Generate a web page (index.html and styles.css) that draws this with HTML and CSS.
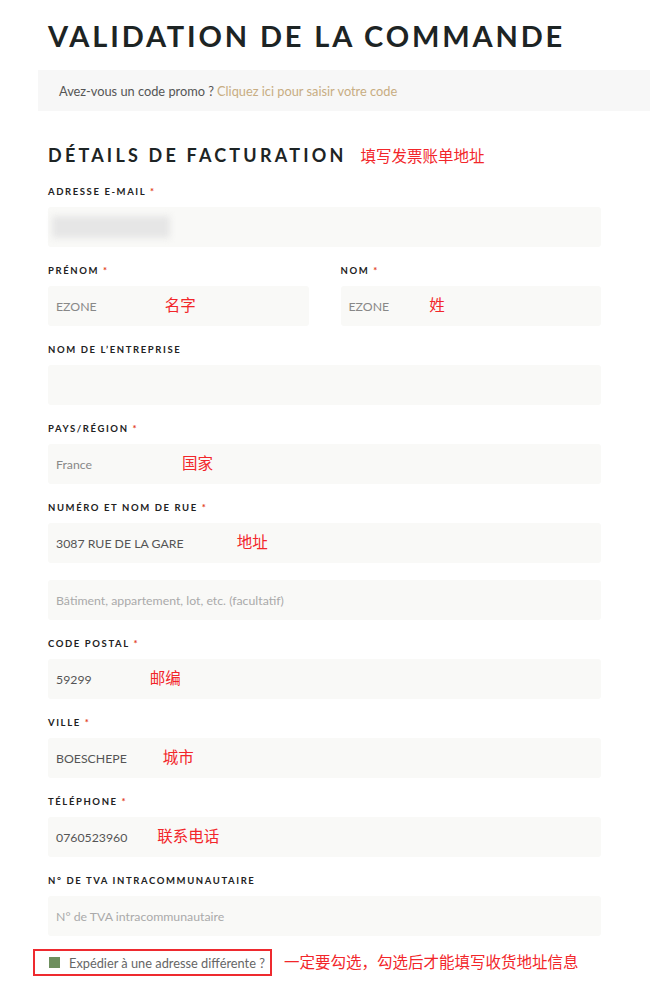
FILE: index.html
```html
<!DOCTYPE html>
<html lang="fr">
<head>
<meta charset="utf-8">
<title>Validation de la commande</title>
<link rel="stylesheet" href="styles.css">
</head>
<body>
<main class="page">
  <h1 class="title">VALIDATION DE LA COMMANDE</h1>
  <div class="promo">Avez-vous un code promo ? <a class="promo-link" href="#">Cliquez ici pour saisir votre code</a></div>

  <h3 class="section"><span>DÉTAILS DE FACTURATION</span><span class="note note-head">填写发票账单地址</span></h3>

  <div class="field">
    <label class="label">ADRESSE E-MAIL <abbr class="req">*</abbr></label>
    <div class="input"><span class="blur"></span></div>
  </div>

  <div class="row">
    <div class="field">
      <label class="label">PRÉNOM <abbr class="req">*</abbr></label>
      <div class="input"><span class="value">EZONE</span><span class="note n-prenom">名字</span></div>
    </div>
    <div class="field">
      <label class="label">NOM <abbr class="req">*</abbr></label>
      <div class="input"><span class="value">EZONE</span><span class="note n-nom">姓</span></div>
    </div>
  </div>

  <div class="field">
    <label class="label">NOM DE L’ENTREPRISE</label>
    <div class="input"></div>
  </div>

  <div class="field">
    <label class="label">PAYS/RÉGION <abbr class="req">*</abbr></label>
    <div class="input"><span class="value">France</span><span class="note n-pays">国家</span></div>
  </div>

  <div class="field">
    <label class="label">NUMÉRO ET NOM DE RUE <abbr class="req">*</abbr></label>
    <div class="input"><span class="value dark">3087 RUE DE LA GARE</span><span class="note n-rue">地址</span></div>
    <div class="input second"><span class="placeholder">Bâtiment, appartement, lot, etc. (facultatif)</span></div>
  </div>

  <div class="field">
    <label class="label">CODE POSTAL <abbr class="req">*</abbr></label>
    <div class="input"><span class="value dark">59299</span><span class="note n-cp">邮编</span></div>
  </div>

  <div class="field">
    <label class="label">VILLE <abbr class="req">*</abbr></label>
    <div class="input"><span class="value dark">BOESCHEPE</span><span class="note n-ville">城市</span></div>
  </div>

  <div class="field">
    <label class="label">TÉLÉPHONE <abbr class="req">*</abbr></label>
    <div class="input"><span class="value dark">0760523960</span><span class="note n-tel">联系电话</span></div>
  </div>

  <div class="field">
    <label class="label">N° DE TVA INTRACOMMUNAUTAIRE</label>
    <div class="input"><span class="placeholder">N° de TVA intracommunautaire</span></div>
  </div>

  <div class="ship">
    <div class="ship-box"><span class="check"></span><span class="ship-text">Expédier à une adresse différente ?</span></div>
    <span class="note n-ship">一定要勾选，勾选后才能填写收货地址信息</span>
  </div>
</main>
</body>
</html>
```

FILE: styles.css
```css
* { box-sizing: border-box; }
html, body { margin: 0; padding: 0; background: #fff; }
body { font-family: Lato, "Noto Sans CJK SC", sans-serif; color: #222; overflow: hidden; }

.page { padding: 21px 0 0 48px; width: 650px; }

.title {
  margin: 0;
  font-family: Lato, sans-serif;
  font-weight: 700;
  font-size: 29px;
  line-height: 29px;
  letter-spacing: 2.85px;
  color: #1d2424;
  white-space: nowrap;
}

.promo {
  margin: 20px 0 0 -10px;
  height: 41px;
  background: #f7f7f7;
  padding-left: 21px;
  display: flex;
  align-items: center;
  font-size: 12.8px;
  color: #555;
}
.promo-link { color: #c8ad82; text-decoration: none; margin-left: 3px; }

.section {
  margin: 33px 0 0 0;
  display: flex;
  align-items: center;
  font-family: Lato, sans-serif;
  font-weight: 700;
  font-size: 18px;
  line-height: 22px;
  letter-spacing: 3.2px;
  color: #1d2424;
}
.note {
  font-family: "Noto Sans CJK SC", sans-serif;
  font-weight: 400;
  color: #f2262a;
  font-size: 15.5px;
  letter-spacing: 0;
  line-height: 20px;
}
.note-head { margin-left: 14px; }

.field { display: flex; flex-direction: column; margin-top: 18px; width: 553px; }
.section + .field { margin-top: 20px; }
.row { display: flex; gap: 32px; width: 553px; }
.row .field { flex: 1; width: auto; }

.label {
  font-size: 9.5px;
  font-weight: 700;
  letter-spacing: 1.6px;
  line-height: 12px;
  color: #222;
}
.req { color: #e2401c; text-decoration: none; border: 0; }

.input {
  margin-top: 9px;
  height: 40px;
  background: #f9f9f7;
  border-radius: 3px;
  display: flex;
  align-items: center;
  padding-left: 8px;
  font-size: 12.3px;
}
.input .note { margin-top: -4px; }
.input.second { margin-top: 17px; }
.value { color: #888; }
.value.dark { color: #555; }
.placeholder { color: #aaa; }

.blur {
  display: block;
  width: 118px;
  height: 22px;
  margin-left: -4px;
  background: #e6e6e6;
  filter: blur(3px);
}

.n-prenom { margin-left: 68px; }
.n-nom { margin-left: 40px; }
.n-pays { margin-left: 90px; }
.n-rue { margin-left: 53px; }
.n-cp { margin-left: 58px; }
.n-ville { margin-left: 36px; }
.n-tel { margin-left: 30px; }

.ship { display: flex; align-items: center; margin: 13px 0 0 -15px; }
.ship-box {
  display: flex;
  align-items: center;
  gap: 9px;
  height: 27px;
  padding: 0 5px 0 14px;
  border: 2px solid #ee2a2f;
}
.check { width: 11px; height: 11px; background: #6e8f5e; display: inline-block; }
.ship-text { font-size: 12.8px; color: #666; }
.n-ship { margin-left: 12px; margin-top: -4px; font-size: 15.5px; }
```
